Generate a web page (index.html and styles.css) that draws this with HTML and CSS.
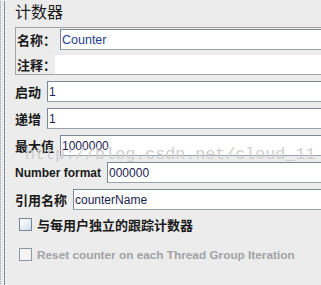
FILE: index.html
```html
<!DOCTYPE html>
<html lang="zh-CN">
<head>
    <meta charset="UTF-8">
    <meta name="viewport" content="width=device-width, initial-scale=1.0">
    <title>计数器</title>
    <link rel="stylesheet" href="styles.css">
</head>
<body>
    <div class="frame">
        <div class="page">
            <div class="title">计数器</div>

            <div class="panel">
                <div class="row name-row">
                    <label for="name">名称：</label>
                    <input type="text" id="name" value="Counter">
                </div>
                <div class="row comment-row">
                    <label for="comment">注释：</label>
                    <textarea id="comment"></textarea>
                </div>
            </div>

            <div class="row field">
                <label for="start">启动</label>
                <input type="text" id="start" value="1">
            </div>
            <div class="row field">
                <label for="incr">递增</label>
                <input type="text" id="incr" value="1">
            </div>
            <div class="row field">
                <label for="max">最大值</label>
                <input type="text" id="max" value="1000000">
            </div>
            <div class="row field">
                <label for="format" class="latin">Number format</label>
                <input type="text" id="format" value="000000">
            </div>
            <div class="row field">
                <label for="ref">引用名称</label>
                <input type="text" id="ref" value="counterName">
            </div>

            <div class="check first">
                <span class="box"></span>
                <span class="check-text">与每用户独立的跟踪计数器</span>
            </div>
            <div class="check disabled">
                <span class="box"></span>
                <span class="check-text latin">Reset counter on each Thread Group Iteration</span>
            </div>

            <div class="watermark">http://blog.csdn.net/cloud_11</div>
        </div>
    </div>
</body>
</html>
```

FILE: styles.css
```css
html, body {
    margin: 0;
    padding: 0;
    overflow: hidden;
}
body {
    background-color: #ececec;
    font-family: "Liberation Sans", "Noto Sans CJK SC", sans-serif;
    color: #1a1a1a;
    width: 321px;
    height: 285px;
}
.frame {
    height: 285px;
    border-left: 1px dotted #9a9a9a;
    padding-left: 3px;
}
.page {
    position: relative;
    height: 285px;
    width: 420px;
    border-left: 1px solid #8090a0;
    padding-left: 10px;
}
.title {
    font-family: "Noto Sans CJK SC", sans-serif;
    font-size: 16px;
    line-height: 20px;
    margin: 1px 0 6px 0;
}
.panel {
    border: 1px solid #a3a3a3;
    padding: 1px 0 0 1px;
    margin-bottom: 6px;
}
.row {
    display: flex;
    align-items: center;
}
label {
    font-family: "Noto Sans CJK SC", sans-serif;
    font-weight: bold;
    font-size: 13px;
    white-space: nowrap;
}
label.latin {
    font-family: "Liberation Sans", sans-serif;
    font-size: 12px;
}
input[type="text"] {
    flex: 1;
    height: 21px;
    box-sizing: border-box;
    border: 1px solid #7a8896;
    border-bottom-color: #98a2ac;
    background: #fff;
    padding: 0 0 0 1px;
    font-family: "Liberation Sans", sans-serif;
    font-size: 12px;
    color: #1c2450;
    outline: none;
}
.name-row label {
    margin-right: 4px;
}
.name-row {
    margin-bottom: 5px;
}
#name {
    color: #1f3f8c;
    font-size: 12.5px;
}
.comment-row {
    height: 19px;
}
textarea {
    flex: 1;
    height: 19px;
    box-sizing: border-box;
    border: none;
    background: #fff;
    resize: none;
    margin: 0 0 0 -1px;
    padding: 0;
    outline: none;
}
.field {
    margin-bottom: 6px;
}
.field label {
    margin-right: 6px;
}
.check {
    display: flex;
    align-items: center;
    gap: 5px;
    margin-left: 4px;
    height: 13px;
}
.check.first {
    margin-top: 8px;
}
.check.disabled {
    margin-top: 17px;
}
.box {
    width: 13px;
    height: 13px;
    box-sizing: border-box;
    border: 1px solid #74849a;
    background: linear-gradient(to bottom right, #ffffff, #d4deea);
}
.disabled .box {
    border-color: #8e969e;
    background: #f4f4f4;
}
.check-text {
    font-family: "Noto Sans CJK SC", sans-serif;
    font-weight: bold;
    font-size: 13px;
}
.check-text.latin {
    font-family: "Liberation Sans", sans-serif;
    font-size: 11.8px;
    color: #a2a2a6;
}
.watermark {
    position: absolute;
    left: 20px;
    top: 144px;
    font-family: "Liberation Mono", monospace;
    font-size: 16.7px;
    line-height: 20px;
    color: #cfcfcf;
    white-space: nowrap;
    pointer-events: none;
}
```
